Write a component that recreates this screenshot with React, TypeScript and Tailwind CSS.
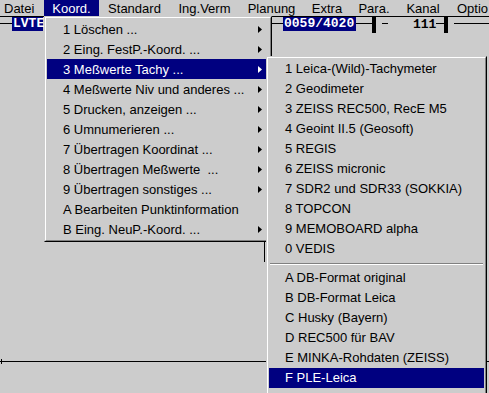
import React from 'react'

const menuBar = [
  { label: 'Datei', w: 'w-[44px] pl-[4px]' },
  { label: 'Koord.', w: 'w-[55px] justify-center', active: true },
  { label: 'Standard', w: 'w-[71px] justify-center' },
  { label: 'Ing.Verm', w: 'w-[69px] justify-center' },
  { label: 'Planung', w: 'w-[65px] justify-center' },
  { label: 'Extra', w: 'w-[46px] justify-center' },
  { label: 'Para.', w: 'w-[48px] justify-center' },
  { label: 'Kanal', w: 'w-[50px] justify-center' },
  { label: 'Optio', w: 'flex-1 pl-[9px]' },
]

const koordItems = [
  { label: '1 Löschen ...', sub: true },
  { label: '2 Eing. FestP.-Koord. ...', sub: true },
  { label: '3 Meßwerte Tachy ...', sub: true, active: true },
  { label: '4 Meßwerte Niv und anderes ...', sub: true },
  { label: '5 Drucken, anzeigen ...', sub: true },
  { label: '6 Umnumerieren ...', sub: true },
  { label: '7 Übertragen Koordinat ...', sub: true },
  { label: '8 Übertragen Meßwerte  ...', sub: true },
  { label: '9 Übertragen sonstiges ...', sub: true },
  { label: 'A Bearbeiten Punktinformation', sub: false },
  { label: 'B Eing. NeuP.-Koord. ...', sub: true },
]

const tachyItems = [
  '1 Leica-(Wild)-Tachymeter',
  '2 Geodimeter',
  '3 ZEISS REC500, RecE M5',
  '4 Geoint II.5 (Geosoft)',
  '5 REGIS',
  '6 ZEISS micronic',
  '7 SDR2 und SDR33 (SOKKIA)',
  '8 TOPCON',
  '9 MEMOBOARD alpha',
  '0 VEDIS',
]

const formatItems = [
  'A DB-Format original',
  'B DB-Format Leica',
  'C Husky (Bayern)',
  'D REC500 für BAV',
  'E MINKA-Rohdaten (ZEISS)',
  'F PLE-Leica',
]

function Arrow({ white }: { white?: boolean }) {
  return (
    <svg width="4" height="7" viewBox="0 0 4 7" className="shrink-0">
      <polygon points="0,0 4,3.5 0,7" fill={white ? '#ffffff' : '#000000'} />
    </svg>
  )
}

// win95 style raised frame
function MenuFrame({ className, children }: { className: string; children: React.ReactNode }) {
  return (
    <div className={`absolute border border-t-[#cccccc] border-l-[#cccccc] border-r-black border-b-black bg-[#cccccc] ${className}`}>
      <div className="border border-t-white border-l-white border-r-[#808080] border-b-[#808080] p-px">
        {children}
      </div>
    </div>
  )
}

export default function App() {
  return (
    <div className="relative w-[489px] h-[393px] overflow-hidden bg-[#cccccc] text-[13px] text-black font-['Liberation_Sans',Arial,sans-serif]">
      <div className="flex h-[16px] leading-[18px] whitespace-nowrap overflow-hidden">
        {menuBar.map((m) => (
          <div
            key={m.label}
            className={`flex h-[16px] ${m.w} ${m.active ? 'bg-[#000080] text-white' : ''}`}
          >
            {m.label}
          </div>
        ))}
      </div>
      <div className="h-px bg-black" />

      <div className="flex items-start h-[17px] font-['Liberation_Mono',monospace] font-bold text-[13px] leading-[14px]">
        <div className="w-[12px] h-px bg-black mt-[6px]" />
        <div className="w-[31px] h-[14px] bg-[#000080] text-white pl-px">LVTE</div>
        <div className="w-[229px]" />
        <div className="w-[11px] h-px bg-black mt-[6px]" />
        <div className="w-[73px] h-[14px] bg-[#000080] text-white pl-px">0059/4020</div>
        <div className="w-[16px] h-px bg-black mt-[6px]" />
        <div className="w-[4px] h-[16px] bg-black" />
        <div className="w-[6px]" />
        <div className="w-[6px] h-px bg-black mt-[6px]" />
        <div className="w-[25px]" />
        <div className="w-[23px] mt-[1px]">111</div>
        <div className="w-[8px] h-px bg-black mt-[6px]" />
        <div className="w-[4px] h-[16px] bg-black" />
        <div className="w-[6px]" />
        <div className="flex-1 h-px bg-black mt-[6px]" />
      </div>

      <div className="ml-[264px] mt-[208px] w-px h-[20px] bg-black" />

      <div className="relative mt-[97px] h-[5px]">
        <div className="absolute left-0 right-0 top-[2px] h-px bg-black" />
        <div className="absolute left-[1px] top-0 w-px h-[5px] bg-black" />
      </div>

      <MenuFrame className="left-[44px] top-[16px] w-[228px]">
        {koordItems.map((it) => (
          <div
            key={it.label}
            className={`flex items-center justify-between h-[20px] pl-[16px] pr-[7px] whitespace-pre ${
              it.active ? 'bg-[#000080] text-white' : ''
            }`}
          >
            <span className="leading-[22px] h-[20px]">{it.label}</span>
            {it.sub && <Arrow white={it.active} />}
          </div>
        ))}
      </MenuFrame>

      <MenuFrame className="left-[266px] top-[56px] w-[221px]">
        <div className="pb-[8px]">
          {tachyItems.map((t) => (
            <div key={t} className="h-[20px] leading-[20px] pl-[16px] whitespace-nowrap">
              {t}
            </div>
          ))}
          <div className="pt-[4px] pb-[3px] px-px">
            <div className="h-px bg-[#808080]" />
            <div className="h-px bg-white" />
          </div>
          {formatItems.map((t, i) => (
            <div
              key={t}
              className={`h-[20px] leading-[20px] pl-[16px] whitespace-nowrap ${
                i === formatItems.length - 1 ? 'bg-[#000080] text-white' : ''
              }`}
            >
              {t}
            </div>
          ))}
        </div>
      </MenuFrame>
    </div>
  )
}
